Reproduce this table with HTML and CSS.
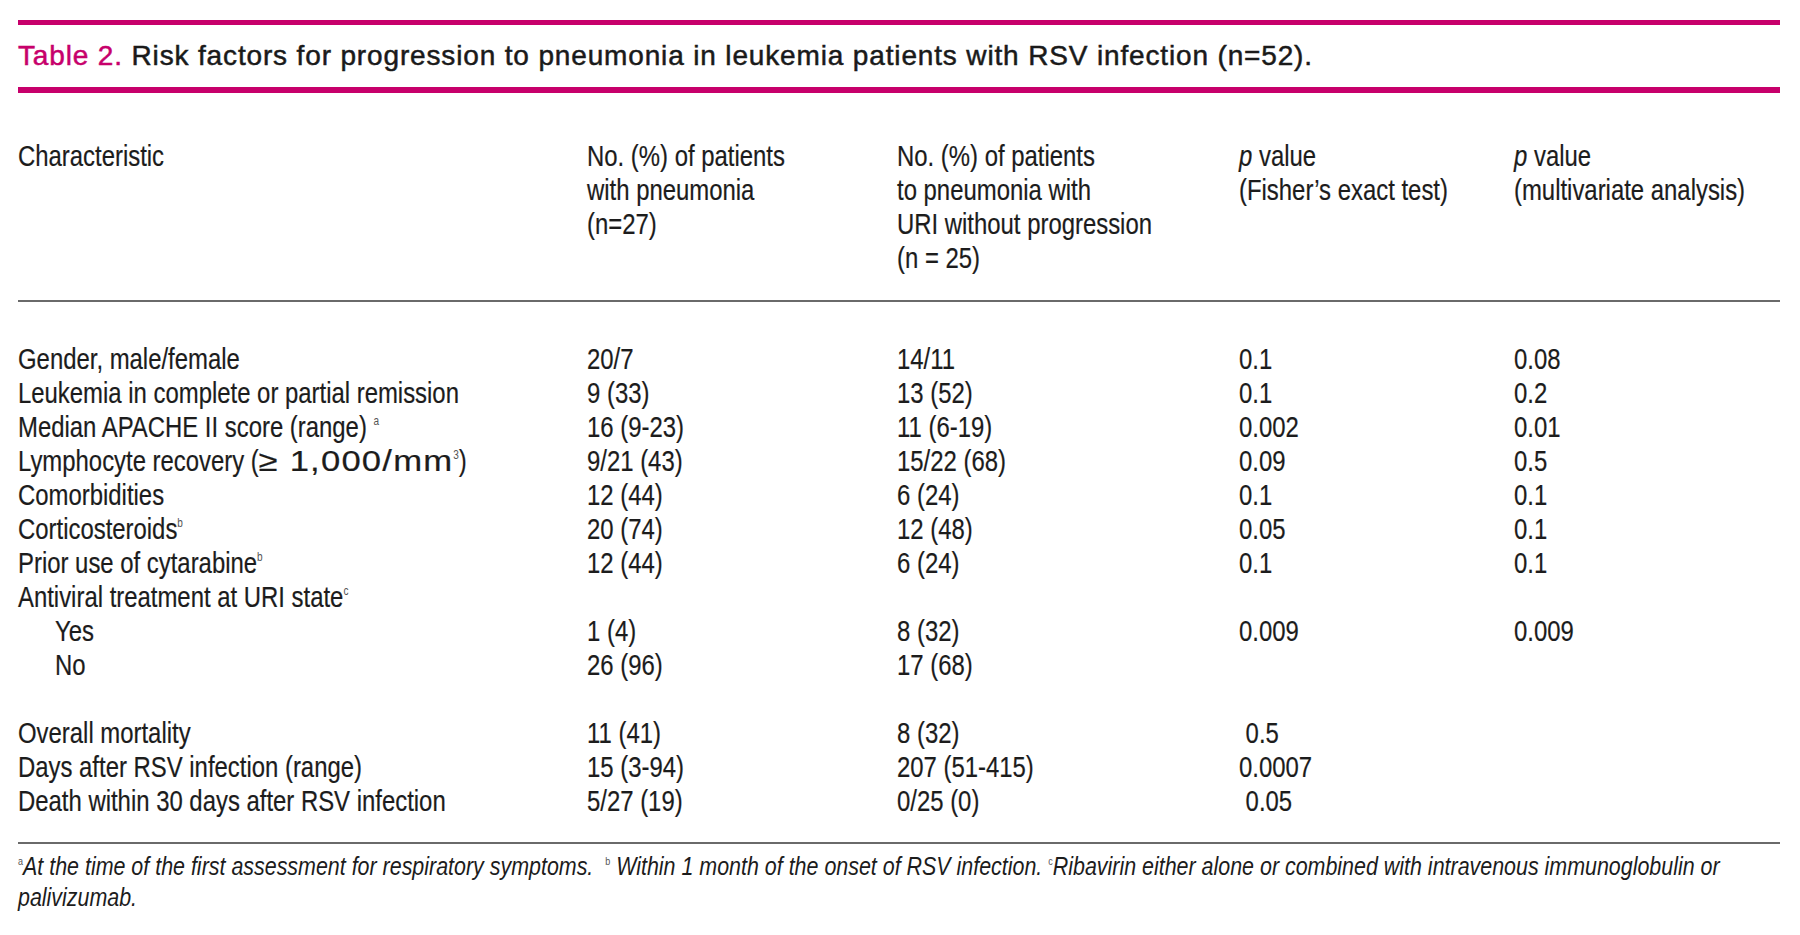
FILE: index.html
```
<!DOCTYPE html>
<html>
<head>
<meta charset="utf-8">
<link rel="stylesheet" href="styles.css">
</head>
<body>
<div class="page">
  <div class="caption"><span class="label">Table 2.</span> Risk factors for progression to pneumonia in leukemia patients with RSV infection (n=52).</div>
  <div class="thead">
    <div class="cell">Characteristic</div>
    <div class="cell">No. (%) of patients<br>with pneumonia<br>(n=27)</div>
    <div class="cell">No. (%) of patients<br>to pneumonia with<br>URI without progression<br>(n = 25)</div>
    <div class="cell"><i>p</i> value<br>(Fisher’s exact test)</div>
    <div class="cell"><i>p</i> value<br>(multivariate analysis)</div>
  </div>
  <div class="tbody">
    <div class="row"><div class="cell">Gender, male/female</div><div class="cell">20/7</div><div class="cell">14/11</div><div class="cell">0.1</div><div class="cell">0.08</div></div>
    <div class="row"><div class="cell">Leukemia in complete or partial remission</div><div class="cell">9 (33)</div><div class="cell">13 (52)</div><div class="cell">0.1</div><div class="cell">0.2</div></div>
    <div class="row"><div class="cell">Median APACHE II score (range) <sup>a</sup></div><div class="cell">16 (9-23)</div><div class="cell">11 (6-19)</div><div class="cell">0.002</div><div class="cell">0.01</div></div>
    <div class="row"><div class="cell">Lymphocyte recovery (<span class="wide">≥ 1,000/mm</span><sup>3</sup>)</div><div class="cell">9/21 (43)</div><div class="cell">15/22 (68)</div><div class="cell">0.09</div><div class="cell">0.5</div></div>
    <div class="row"><div class="cell">Comorbidities</div><div class="cell">12 (44)</div><div class="cell">6 (24)</div><div class="cell">0.1</div><div class="cell">0.1</div></div>
    <div class="row"><div class="cell">Corticosteroids<sup>b</sup></div><div class="cell">20 (74)</div><div class="cell">12 (48)</div><div class="cell">0.05</div><div class="cell">0.1</div></div>
    <div class="row"><div class="cell">Prior use of cytarabine<sup>b</sup></div><div class="cell">12 (44)</div><div class="cell">6 (24)</div><div class="cell">0.1</div><div class="cell">0.1</div></div>
    <div class="row"><div class="cell">Antiviral treatment at URI state<sup>c</sup></div><div class="cell"></div><div class="cell"></div><div class="cell"></div><div class="cell"></div></div>
    <div class="row"><div class="cell sub">Yes</div><div class="cell">1 (4)</div><div class="cell">8 (32)</div><div class="cell">0.009</div><div class="cell">0.009</div></div>
    <div class="row"><div class="cell sub">No</div><div class="cell">26 (96)</div><div class="cell">17 (68)</div><div class="cell"></div><div class="cell"></div></div>
    <div class="row blank"></div>
    <div class="row"><div class="cell">Overall mortality</div><div class="cell">11 (41)</div><div class="cell">8 (32)</div><div class="cell shift">0.5</div><div class="cell"></div></div>
    <div class="row"><div class="cell">Days after RSV infection (range)</div><div class="cell">15 (3-94)</div><div class="cell">207 (51-415)</div><div class="cell">0.0007</div><div class="cell"></div></div>
    <div class="row"><div class="cell">Death within 30 days after RSV infection</div><div class="cell">5/27 (19)</div><div class="cell">0/25 (0)</div><div class="cell shift">0.05</div><div class="cell"></div></div>
  </div>
  <div class="notes"><sup>a</sup>At the time of the first assessment for respiratory symptoms.&nbsp; <sup>b</sup> Within 1 month of the onset of RSV infection. <sup>c</sup>Ribavirin either alone or combined with intravenous immunoglobulin or palivizumab.</div>
</div>
</body>
</html>
```
FILE: styles.css
```
html, body {
  margin: 0;
  padding: 0;
  background: #ffffff;
  overflow: hidden;
}

.page {
  width: 1762px;
  padding: 20px 0 0 18px;
  color: #1c1c1c;
  font-family: "Liberation Sans", Arial, sans-serif;
  font-size: 29px;
}

.caption {
  border-top: 5px solid #c7006b;
  border-bottom: 6px solid #c7006b;
  height: 62px;
  line-height: 62px;
  font-size: 28px;
  letter-spacing: 0.85px;
  color: #1a1a1a;
  -webkit-text-stroke: 0.5px #1a1a1a;
  white-space: nowrap;
}

.caption .label {
  color: #c7006b;
  -webkit-text-stroke: 0.5px #c7006b;
}

.thead,
.row {
  display: grid;
  grid-template-columns: 569px 310px 342px 275px 266px;
}

.thead {
  padding: 46px 0 25px;
  border-bottom: 2px solid #6a6a6a;
  line-height: 34px;
}

.tbody {
  padding: 40px 0 24px;
  border-bottom: 2px solid #6a6a6a;
}

.row {
  height: 34px;
  line-height: 34px;
}

.cell {
  white-space: nowrap;
  transform: scaleX(0.824);
  transform-origin: 0 0;
  -webkit-text-stroke: 0.2px #1c1c1c;
}

.cell .wide {
  display: inline-block;
  letter-spacing: 1px;
  transform: scaleX(1.45);
  transform-origin: 0 0;
  margin-right: 73px;
}

.cell.sub {
  padding-left: 45px;
}

.cell.shift {
  padding-left: 8px;
}

sup {
  font-size: 0.42em;
  line-height: 0;
  vertical-align: 0.95em;
  color: #555;
  -webkit-text-stroke: 0;
}

.notes {
  width: 2125px;
  padding-top: 7px;
  font-style: italic;
  font-size: 26px;
  line-height: 31px;
  transform: scaleX(0.824);
  transform-origin: 0 0;
}

.notes sup {
  font-style: normal;
}
```
